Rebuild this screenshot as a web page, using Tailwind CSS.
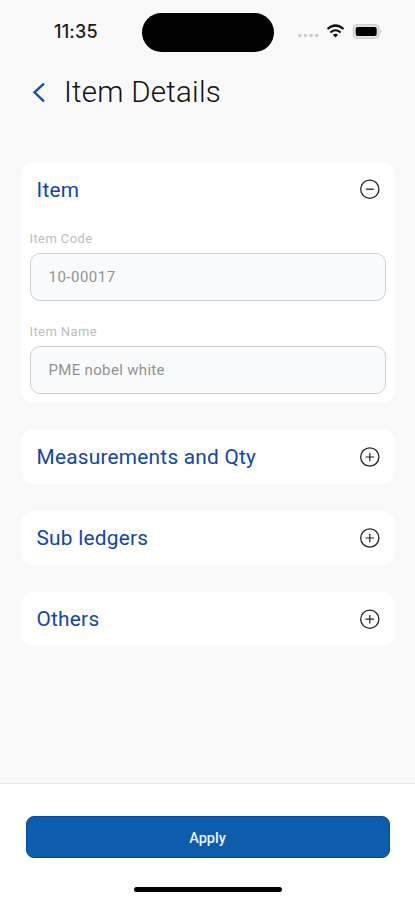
<!DOCTYPE html>
<html lang="en">
<head>
<meta charset="utf-8">
<meta name="viewport" content="width=device-width, initial-scale=1">
<title>Item Details</title>
<script src="https://cdn.jsdelivr.net/npm/@tailwindcss/browser@4"></script>
</head>
<body class="bg-[#f9f9f9] font-[Roboto,sans-serif]">
<div class="flex h-[900px] w-[415px] flex-col overflow-hidden bg-[#f9f9f9]">
  <!-- Status bar -->
  <header class="flex h-[62px] shrink-0 items-center pt-[2px]">
    <div class="w-[142px] pl-[54px] font-[Inter,sans-serif] text-[18px] leading-none font-medium tracking-[0.2px] text-[#1c1c1c]">11:35</div>
    <div class="h-[39px] w-[132px] rounded-full bg-black"></div>
    <div class="ml-[23px] flex items-center">
      <svg class="mt-[7px] h-[5px] w-[23px]" viewBox="0 0 23 5" fill="#c9c9c9"><circle cx="2.700" cy="2.500" r="1.700"/><circle cx="8.400" cy="2.500" r="1.700"/><circle cx="14.100" cy="2.500" r="1.700"/><circle cx="19.800" cy="2.500" r="1.700"/></svg>
      <svg class="mb-[2px] ml-[6px] h-[14px] w-[19px]" viewBox="0 0 19 14" fill="none" stroke="#111"><path d="M1.500 5Q9.500-2 17.500 5" stroke-width="2.200"/><path d="M4.400 8.400Q9.500 4 14.600 8.400" stroke-width="2"/><path d="M9.500 13.500L6.900 10.700Q9.500 8.700 12.100 10.700Z" fill="#111" stroke="none"/></svg>
      <svg class="mb-[2px] ml-[6.5px] h-[17px] w-[31px]" viewBox="0 0 31 17"><rect x="1.400" y="1.700" width="25.400" height="13.600" rx="4.200" fill="#e6e6e6" stroke="#d0d0d0" stroke-width="1.600"/><rect x="3.700" y="4" width="21" height="9" rx="2" fill="#000"/><path d="M28.400 6.300Q31 8.500 28.400 10.700Z" fill="#c8c8c8"/></svg>
    </div>
  </header>

  <!-- Page title -->
  <div class="flex h-[62px] shrink-0 items-center pl-[32px]">
    <svg class="-mt-[2px] h-[21px] w-[14px]" viewBox="0 0 14 22" fill="none" stroke="#1450ae" stroke-width="2.500"><path d="M12.200 1.600L2.300 10.800L12.200 20.200"/></svg>
    <h1 class="ml-[18px] text-[29.5px] leading-none font-light tracking-[0.25px] text-[#111]">Item Details</h1>
  </div>

  <!-- Accordion sections -->
  <main class="flex grow flex-col px-[21.5px] pt-[38px]">
    <section class="h-[240px] rounded-[10px] bg-white px-[8px]">
      <div class="flex h-[54px] items-center justify-between pr-[6px] pl-[7px]">
        <h2 class="pt-[2px] text-[20.8px] leading-none tracking-[0.25px] text-[#1246a2]">Item</h2>
        <svg class="h-[21px] w-[21px]" viewBox="0 0 21 21" fill="none" stroke="#222"><circle cx="10.800" cy="10.200" r="9.100" stroke-width="1.300"/><path d="M6.800 10.200H14.800" stroke-width="1.300"/></svg>
      </div>
      <div class="pt-[15px] text-[13px] leading-[16px] tracking-[0.4px] text-[#bdbdbd]">Item Code</div>
      <div class="mt-[6px] flex h-[48px] items-center rounded-[10px] border-[1.5px] border-[#cdd0d2] bg-[#f9fbfd] pl-[18px] text-[15px] leading-none tracking-[0.5px] text-[#929292]">10-00017</div>
      <div class="pt-[23px] text-[13px] leading-[16px] tracking-[0.4px] text-[#bdbdbd]">Item Name</div>
      <div class="mt-[6px] flex h-[48px] items-center rounded-[10px] border-[1.5px] border-[#cdd0d2] bg-[#f9fbfd] pl-[18px] text-[15px] leading-none tracking-[0.33px] text-[#929292]">PME nobel white</div>
    </section>
    <section class="mt-[28px] flex h-[54px] items-center justify-between rounded-[10px] bg-white pr-[14px] pl-[15px]">
      <h2 class="text-[20.8px] leading-none tracking-[0.25px] text-[#1246a2]">Measurements and Qty</h2>
      <svg class="h-[21px] w-[21px]" viewBox="0 0 21 21" fill="none" stroke="#222"><circle cx="10.800" cy="10" r="9.100" stroke-width="1.300"/><path d="M6.500 10H15.100M10.800 5.700V14.300" stroke-width="1.200"/></svg>
    </section>
    <section class="mt-[27px] flex h-[54px] items-center justify-between rounded-[10px] bg-white pr-[14px] pl-[15px]">
      <h2 class="text-[20.8px] leading-none tracking-[0.25px] text-[#1246a2]">Sub ledgers</h2>
      <svg class="h-[21px] w-[21px]" viewBox="0 0 21 21" fill="none" stroke="#222"><circle cx="10.800" cy="10" r="9.100" stroke-width="1.300"/><path d="M6.500 10H15.100M10.800 5.700V14.300" stroke-width="1.200"/></svg>
    </section>
    <section class="mt-[27px] flex h-[54px] items-center justify-between rounded-[10px] bg-white pr-[14px] pl-[15px]">
      <h2 class="text-[20.8px] leading-none tracking-[0.25px] text-[#1246a2]">Others</h2>
      <svg class="h-[21px] w-[21px]" viewBox="0 0 21 21" fill="none" stroke="#222"><circle cx="10.800" cy="10.200" r="9.100" stroke-width="1.300"/><path d="M6.500 10.200H15.100M10.800 5.900V14.500" stroke-width="1.200"/></svg>
    </section>
  </main>

  <!-- Apply action and home indicator -->
  <footer class="flex h-[117px] shrink-0 flex-col items-center border-t-[1.500px] border-[#e8e8e8] bg-white pt-[32px]">
    <button class="h-[42px] w-[364px] rounded-[8px] border border-[#0646a0] bg-[#0d5dac] pt-[4px] text-[14.5px] leading-none font-medium text-[#eef4fb]">Apply</button>
    <div class="mt-[29px] h-[5px] w-[148px] rounded-full bg-black"></div>
  </footer>
</div>
</body>
</html>
